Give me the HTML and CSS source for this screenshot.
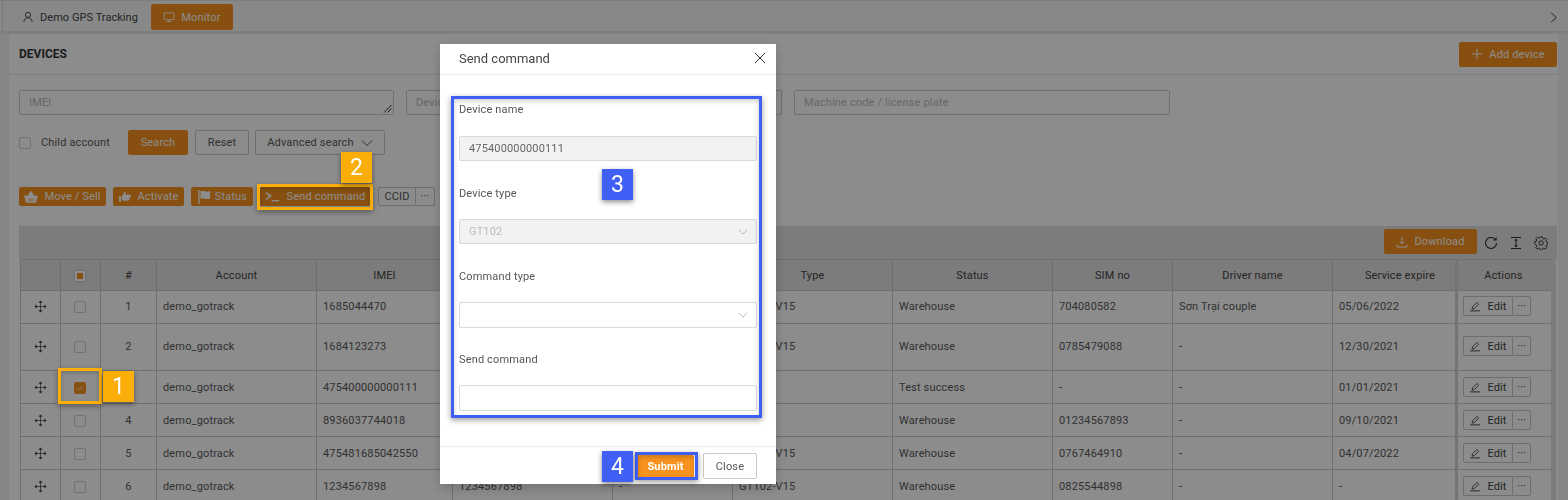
FILE: index.html
```html
<!DOCTYPE html>
<html lang="en">
<head>
  <meta charset="UTF-8" />
  <title>Devices - Send command</title>
  <link rel="stylesheet" href="styles.css">
</head>
<body>
  <svg class="sprites" xmlns="http://www.w3.org/2000/svg">
    <symbol id="i-drag" viewBox="0 0 16 16">
      <path d="M8 1.500v13M1.500 8h13M8 1 6.400 3h3.200zM8 15l-1.600-2h3.200zM1 8l2-1.600v3.200zM15 8l-2-1.600v3.200z" fill="currentColor" stroke="currentColor" stroke-width=".9"/>
    </symbol>
    <symbol id="i-edit" viewBox="0 0 16 16">
      <path d="M1.500 14.500h13" fill="none" stroke="currentColor" stroke-width="1.300"/>
      <path d="M4 12.200l.7-3L10.600 3.300l2.300 2.300-5.900 5.900z" fill="none" stroke="currentColor" stroke-width="1.200"/>
    </symbol>
    <symbol id="i-down" viewBox="0 0 12 12">
      <path d="M1 3.500 6 8.500l5-5" fill="none" stroke="currentColor" stroke-width="1"/>
    </symbol>
  </svg>

  <div class="page">
    <nav class="topbar">
      <a class="tab tab-home">
        <svg class="ico" viewBox="0 0 16 16"><circle cx="8" cy="5.200" r="3.400" fill="none" stroke="currentColor" stroke-width="1.300"/><path d="M2.500 14.500c.2-3.400 2.500-5.500 5.500-5.500s5.300 2.100 5.500 5.500" fill="none" stroke="currentColor" stroke-width="1.300"/></svg>
        Demo GPS Tracking
      </a>
      <a class="tab tab-active">
        <svg class="ico" viewBox="0 0 16 16"><path d="M1.500 2.500h13v9h-13zM8 11.500v2.500M4.500 14h7" fill="none" stroke="currentColor" stroke-width="1.100"/></svg>
        Monitor
      </a>
      <svg class="tab-next" viewBox="0 0 12 12"><path d="M3.500 1 9 6l-5.500 5" fill="none" stroke="currentColor" stroke-width="1"/></svg>
    </nav>

    <section class="card">
      <header class="card-head">
        <h1>DEVICES</h1>
        <button class="btn btn-primary btn-add">
          <svg class="ico" viewBox="0 0 12 12"><path d="M6 1v10M1 6h10" fill="none" stroke="currentColor" stroke-width="1"/></svg>
          Add device
        </button>
      </header>

      <div class="filters">
        <div class="filter-fields">
          <div class="field field-area">IMEI
            <svg class="grip" viewBox="0 0 9 9"><path d="M8.500 1 1 8.500M8.500 4.500 4.500 8.500" fill="none" stroke="#333" stroke-width="1"/></svg>
          </div>
          <div class="field">Device name</div>
          <div class="field">Machine code / license plate</div>
        </div>
        <div class="filter-actions">
          <label class="child"><span class="check"></span>Child account</label>
          <button class="btn btn-primary btn-search">Search</button>
          <button class="btn btn-reset">Reset</button>
          <button class="btn btn-adv">Advanced search <svg class="ico-down"><use href="#i-down"/></svg></button>
        </div>
      </div>

      <div class="bulk">
        <button class="btn btn-primary btn-bulk btn-move">
          <svg class="ico" viewBox="0 0 16 16"><path d="M0 6.500h16v2h-1l-1.200 6H2.200L1 8.500H0zM4 6.500 7.500 1.500h1l3.500 5" fill="currentColor"/><path d="M8 9.500v3.500M5.300 9.500l.3 3.500M10.700 9.500l-.3 3.500" stroke="#f7931e" stroke-width="1"/></svg>
          Move / Sell
        </button>
        <button class="btn btn-primary btn-bulk btn-activate">
          <svg class="ico" viewBox="0 0 16 16"><path d="M1 7h2.500v6.500H1zM4.500 7.200 7.300 2.500c1-.4 1.700.3 1.500 1.400L8.400 5.500H14c1 0 1.300 1.300.4 1.800h-.6c.6.700.3 1.500-.4 1.700.4.700 0 1.500-.7 1.700.2.900-.3 1.500-1.200 1.500H6.500l-2-.9z" fill="currentColor"/></svg>
          Activate
        </button>
        <button class="btn btn-primary btn-bulk btn-status">
          <svg class="ico" viewBox="0 0 16 16"><path d="M1.500 0h1.500v16H1.500zM4 1.500c3.500-1 5.500 1.300 11 0v8.500c-5.500 1.300-7.500-1-11 0z" fill="currentColor"/></svg>
          Status
        </button>
        <button class="btn btn-primary btn-bulk btn-send">
          <svg class="ico ico-term" viewBox="0 0 16 12"><path d="M1 1.500 6 5 1 8.500" fill="none" stroke="currentColor" stroke-width="1.700"/><path d="M7 10h8" stroke="currentColor" stroke-width="1.500"/></svg>
          Send command
        </button>
        <div class="btn-group">
          <button class="btn btn-ccid">CCID</button>
          <button class="btn btn-more">···</button>
        </div>
      </div>

      <div class="table-tools">
        <button class="btn btn-primary btn-download">
          <svg class="ico" viewBox="0 0 12 12"><path d="M6 1v7M3.800 5.800 6 8l2.200-2.200M1 8.500V11h10V8.500" fill="none" stroke="currentColor" stroke-width="1"/></svg>
          Download
        </button>
        <svg class="tool" viewBox="0 0 14 14"><path d="M12.500 7A5.500 5.500 0 1 1 10.500 2.700" fill="none" stroke="currentColor" stroke-width="1.100"/><path d="M12.600 1v3.600H9z" fill="currentColor"/></svg>
        <svg class="tool" viewBox="0 0 14 14"><path d="M2 1.500h10M2 12.500h10M7 3v8" fill="none" stroke="currentColor" stroke-width="1.100"/><path d="M7 2.600 5.400 4.800h3.200zM7 11.400 5.400 9.200h3.200z" fill="currentColor"/></svg>
        <svg class="tool" viewBox="0 0 14 14"><path d="M5.900 1h2.200l.4 1.800 1.200.5 1.600-1 1.500 1.600-1 1.500.5 1.200 1.700.4v2.200l-1.700.4-.5 1.200 1 1.500-1.500 1.500-1.600-1-1.200.5-.4 1.700H5.900l-.4-1.700-1.200-.5-1.600 1-1.500-1.500 1-1.500-.5-1.200L0 8.200V6l1.700-.4.500-1.200-1-1.500 1.500-1.600 1.600 1 1.200-.5z" transform="translate(.7 -.1) scale(.95)" fill="none" stroke="currentColor" stroke-width="1"/><circle cx="7" cy="7" r="2.200" fill="none" stroke="currentColor" stroke-width="1"/></svg>
      </div>

      <table class="devices">
        <colgroup>
          <col class="c-drag"><col class="c-check"><col class="c-num"><col class="c-account"><col class="c-imei">
          <col class="c-name"><col class="c-group"><col class="c-type"><col class="c-status"><col class="c-sim">
          <col class="c-driver"><col class="c-expire"><col class="c-actions">
        </colgroup>
        <thead>
          <tr>
            <th></th><th class="mid"><span class="check check-some"></span></th><th>#</th><th>Account</th><th>IMEI</th>
            <th></th><th></th><th>Type</th><th>Status</th><th>SIM no</th>
            <th>Driver name</th><th class="th-expire">Service expire</th><th class="col-actions">Actions</th>
          </tr>
        </thead>
        <tbody>
          <tr class="row-up">
            <td class="mid"><svg class="drag"><use href="#i-drag"/></svg></td><td class="mid"><span class="check"></span></td><td class="mid">1</td>
            <td>demo_gotrack</td><td>1685044470</td><td></td><td></td><td>GT102-V15</td><td>Warehouse</td><td>704080582</td><td>Sơn Trại couple</td><td>05/06/2022</td>
            <td class="col-actions"><div class="row-btns"><button class="btn btn-edit"><svg class="ico"><use href="#i-edit"/></svg>Edit</button><button class="btn btn-dots">···</button></div></td>
          </tr>
          <tr class="row-tall row-up">
            <td class="mid"><svg class="drag"><use href="#i-drag"/></svg></td><td class="mid"><span class="check"></span></td><td class="mid">2</td>
            <td>demo_gotrack</td><td>1684123273</td><td></td><td></td><td>GT102-V15</td><td>Warehouse</td><td>0785479088</td><td>-</td><td>12/30/2021</td>
            <td class="col-actions"><div class="row-btns"><button class="btn btn-edit"><svg class="ico"><use href="#i-edit"/></svg>Edit</button><button class="btn btn-dots">···</button></div></td>
          </tr>
          <tr>
            <td class="mid"><svg class="drag"><use href="#i-drag"/></svg></td><td class="mid"><span class="check check-on"><svg viewBox="0 0 12 12"><path d="M3 6l2.200 2.200L9.300 4" fill="none" stroke="#fff" stroke-width="1"/></svg></span></td><td class="mid">3</td>
            <td>demo_gotrack</td><td>475400000000111</td><td></td><td></td><td></td><td>Test success</td><td>-</td><td>-</td><td>01/01/2021</td>
            <td class="col-actions"><div class="row-btns"><button class="btn btn-edit"><svg class="ico"><use href="#i-edit"/></svg>Edit</button><button class="btn btn-dots">···</button></div></td>
          </tr>
          <tr>
            <td class="mid"><svg class="drag"><use href="#i-drag"/></svg></td><td class="mid"><span class="check"></span></td><td class="mid">4</td>
            <td>demo_gotrack</td><td>8936037744018</td><td></td><td></td><td></td><td>Warehouse</td><td>01234567893</td><td>-</td><td>09/10/2021</td>
            <td class="col-actions"><div class="row-btns"><button class="btn btn-edit"><svg class="ico"><use href="#i-edit"/></svg>Edit</button><button class="btn btn-dots">···</button></div></td>
          </tr>
          <tr>
            <td class="mid"><svg class="drag"><use href="#i-drag"/></svg></td><td class="mid"><span class="check"></span></td><td class="mid">5</td>
            <td>demo_gotrack</td><td>475481685042550</td><td></td><td></td><td>GT102-V15</td><td>Warehouse</td><td>0767464910</td><td>-</td><td>04/07/2022</td>
            <td class="col-actions"><div class="row-btns"><button class="btn btn-edit"><svg class="ico"><use href="#i-edit"/></svg>Edit</button><button class="btn btn-dots">···</button></div></td>
          </tr>
          <tr>
            <td class="mid"><svg class="drag"><use href="#i-drag"/></svg></td><td class="mid"><span class="check"></span></td><td class="mid">6</td>
            <td>demo_gotrack</td><td>1234567898</td><td>1234567898</td><td>-</td><td>GT102-V15</td><td>Warehouse</td><td>0825544898</td><td>-</td><td>-</td>
            <td class="col-actions"><div class="row-btns"><button class="btn btn-edit"><svg class="ico"><use href="#i-edit"/></svg>Edit</button><button class="btn btn-dots">···</button></div></td>
          </tr>
        </tbody>
      </table>
    </section>
  </div>

  <div class="mask"></div>

  <div class="modal">
    <header class="modal-head">
      <h2>Send command</h2>
      <svg class="modal-close" viewBox="0 0 12 12"><path d="M1 1l10 10M11 1 1 11" fill="none" stroke="#333" stroke-width="1"/></svg>
    </header>
    <div class="modal-body">
      <label class="m-label">Device name</label>
      <div class="m-input m-disabled">475400000000111</div>
      <label class="m-label">Device type</label>
      <div class="m-input m-disabled m-ghost">GT102<svg class="ico-down"><use href="#i-down"/></svg></div>
      <label class="m-label">Command type</label>
      <div class="m-input m-tall"><svg class="ico-down"><use href="#i-down"/></svg></div>
      <label class="m-label">Send command</label>
      <div class="m-input m-tall"></div>
    </div>
    <footer class="modal-foot">
      <button class="btn m-submit">Submit</button>
      <button class="btn m-close">Close</button>
    </footer>
  </div>

  <!-- tutorial marks drawn over the screenshot -->
  <div class="mark mark-orange mark-check"></div>
  <div class="mark mark-orange mark-send"></div>
  <div class="mark mark-blue mark-form"></div>
  <div class="mark mark-blue mark-submit"></div>
  <div class="badge badge-orange badge-1">1</div>
  <div class="badge badge-orange badge-2">2</div>
  <div class="badge badge-blue badge-3">3</div>
  <div class="badge badge-blue badge-4">4</div>
</body>
</html>
```

FILE: styles.css
```css
* {
  box-sizing: border-box;
}

html, body {
  height: 500px;
  margin: 0;
  overflow: hidden;
}

body {
  font-family: Roboto, "Liberation Sans", sans-serif;
  font-size: 11px;
  letter-spacing: 0.15px;
  color: #595959;
  background: #f3f3f3;
}

.sprites {
  display: none;
}

button {
  font: inherit;
  letter-spacing: inherit;
}

.ico {
  width: 12px;
  height: 12px;
  flex: none;
}

.ico-down {
  width: 12px;
  height: 12px;
  color: #555;
}

/* top bar */
.topbar {
  height: 34px;
  padding: 3px 9px 0 22px;
  display: flex;
  align-items: flex-start;
  gap: 13px;
  position: relative;
  border-top: 1px solid #e4e4e4;
  border-bottom: 3px solid #e8e8e8;
  background: #f8f8f8;
}

.topbar::before {
  content: "";
  position: absolute;
  left: 0;
  top: 0;
  width: 2px;
  height: 30px;
  border-right: 1px solid #ddd;
}

.tab {
  height: 26px;
  display: flex;
  align-items: center;
  gap: 6px;
  color: #444;
}

.tab-home {
  letter-spacing: 0.05px;
}

.tab-active {
  width: 82px;
  justify-content: center;
  background: #f7931e;
  color: #fff;
  border-radius: 2px;
}

.tab-next {
  width: 11px;
  height: 11px;
  margin: 8px 0 0 auto;
  color: #333;
}

/* card */
.card {
  margin: 0 10px 0 9px;
  background: #fff;
}

.card-head {
  height: 41px;
  padding: 0 1px 0 10px;
  display: flex;
  align-items: center;
  justify-content: space-between;
  border-bottom: 1px solid #e8e8e8;
}

.card-head h1 {
  margin: 0;
  font-size: 12px;
  font-weight: 700;
  letter-spacing: 0;
  color: #333;
}

.btn {
  height: 25px;
  padding: 0;
  display: inline-flex;
  align-items: center;
  justify-content: center;
  gap: 6px;
  background: #fff;
  border: 1px solid #c8c8c8;
  border-radius: 2px;
  color: #595959;
}

.btn-primary {
  background: #f7931e;
  border-color: #f7931e;
  color: #fff;
}

.btn-add {
  width: 98px;
  gap: 6px;
}

/* filters */
.filters {
  padding: 15px 0 0 10px;
}

.filter-fields {
  display: grid;
  grid-template-columns: 375px 376px 376px;
  gap: 12px;
}

.field {
  height: 25px;
  line-height: 23px;
  padding: 0 9px;
  border: 1px solid #ccc;
  border-radius: 2px;
  color: #bbb;
  position: relative;
}

.grip {
  position: absolute;
  right: 1px;
  bottom: 1px;
  width: 9px;
  height: 9px;
}

.filter-actions {
  margin-top: 15px;
  display: flex;
  align-items: center;
}

.child {
  width: 109px;
  display: flex;
  align-items: center;
  gap: 10px;
}

.check {
  width: 12px;
  height: 12px;
  display: inline-block;
  flex: none;
  background: #fff;
  border: 1px solid #d0d0d0;
  border-radius: 2px;
  vertical-align: middle;
}

.check-on {
  background: #f7931e;
  border-color: #f7931e;
}

.check-on svg {
  display: block;
  width: 10px;
  height: 10px;
}

.check-some {
  position: relative;
}

.check-some::after {
  content: "";
  position: absolute;
  inset: 2px;
  background: #f7931e;
}

.btn-search {
  width: 60px;
}

.btn-reset {
  width: 54px;
  margin-left: 7px;
}

.btn-adv {
  width: 130px;
  margin-left: 6px;
  gap: 7px;
}

/* bulk actions */
.bulk {
  margin-top: 32px;
  padding-left: 10px;
  display: flex;
  align-items: center;
  gap: 7px;
}

.btn-bulk {
  height: 19px;
  gap: 6px;
}

.btn-bulk .ico {
  width: 14px;
  height: 14px;
}

.btn-move {
  width: 87px;
}

.btn-activate {
  width: 71px;
  gap: 5px;
}

.btn-status {
  width: 62px;
  gap: 4px;
}

.btn-send {
  width: 110px;
  gap: 7px;
  margin-right: 1px;
}

.btn-bulk .ico-term {
  width: 15px;
  height: 12px;
}

.btn-group {
  display: flex;
}

.btn-ccid {
  width: 38px;
  height: 19px;
  border-radius: 2px 0 0 2px;
}

.btn-more {
  width: 19px;
  height: 19px;
  border-left: 0;
  border-radius: 0 2px 2px 0;
}

/* table */
.table-tools {
  height: 33px;
  margin: 20px 1px 0 10px;
  padding: 3px 9px 0 0;
  display: flex;
  align-items: flex-start;
  justify-content: flex-end;
  gap: 11px;
  background: #e2e2e2;
}

.btn-download {
  width: 93px;
  margin-right: -4px;
}

.tool {
  width: 14px;
  height: 14px;
  margin-top: 7px;
  color: #333;
}

.devices {
  width: 1533px;
  margin-left: 11px;
  table-layout: fixed;
  border-collapse: collapse;
}

.c-drag { width: 40px; }
.c-check { width: 40px; }
.c-num { width: 56px; }
.c-account { width: 160px; }
.c-imei { width: 136px; }
.c-name { width: 160px; }
.c-group { width: 120px; }
.c-type { width: 160px; }
.c-status { width: 160px; }
.c-sim { width: 120px; }
.c-driver { width: 160px; }
.c-expire { width: 124px; }
.c-actions { width: 97px; }

.devices th, .devices td {
  padding: 0 6px;
  border: 1px solid #ccc;
  font-weight: 400;
  white-space: nowrap;
  overflow: hidden;
}

.devices th {
  height: 31px;
  text-align: center;
  background: #e2e2e2;
  color: #444;
}

.devices .th-expire {
  padding-left: 18px;
}

.devices td {
  height: 33px;
  color: #595959;
}

.devices .row-tall td {
  height: 47px;
}

.devices .row-up td {
  padding-bottom: 2px;
}

.devices td.mid, .devices th.mid {
  padding-left: 0;
  padding-right: 0;
  text-align: center;
}

.devices .mid .check {
  margin-right: 1px;
}

.devices .col-actions {
  padding-left: 5px;
  padding-right: 0;
  border-left: 3px solid #d4d4d4;
  border-right: 5px solid #e2e2e2;
}

.devices th.col-actions {
  padding: 0 2px 0 0;
}

.drag {
  width: 13px;
  height: 13px;
  display: block;
  margin: 0 auto;
  color: #444;
}

.row-btns {
  display: flex;
}

.btn-edit {
  width: 50px;
  height: 20px;
  border-radius: 2px 0 0 2px;
  color: #444;
}

.btn-dots {
  width: 18px;
  height: 20px;
  border-left: 0;
  border-radius: 0 2px 2px 0;
  color: #444;
}

/* dim layer */
.mask {
  position: fixed;
  inset: 0;
  background: rgba(0, 0, 0, 0.45);
}

/* modal */
.modal {
  position: fixed;
  left: 440px;
  top: 44px;
  width: 336px;
  height: 440px;
  display: flex;
  flex-direction: column;
  background: #fff;
  box-shadow: 0 4px 12px rgba(0, 0, 0, 0.2);
}

.modal-head {
  height: 31px;
  padding: 0 10px 2px 19px;
  display: flex;
  align-items: center;
  justify-content: space-between;
  border-bottom: 1px solid #eee;
  flex: none;
}

.modal-head h2 {
  margin: 0;
  font-size: 13px;
  font-weight: 400;
  letter-spacing: 0;
  color: #444;
}

.modal-close {
  width: 12px;
  height: 12px;
}

.modal-body {
  flex: 1;
  padding: 28px 19px 0 19px;
}

.m-label {
  height: 16px;
  display: block;
  line-height: 16px;
  color: #555;
}

.m-label:first-child {
  line-height: 14px;
}

.m-input {
  height: 25px;
  margin: 17px 0 25px;
  padding: 0 9px;
  display: flex;
  align-items: center;
  justify-content: space-between;
  border: 1px solid #d9d9d9;
  border-radius: 2px;
  color: #666;
}

.m-disabled {
  background: #f2f2f2;
}

.m-ghost {
  color: #bbb;
}

.m-input .ico-down {
  width: 10px;
  height: 10px;
  margin: 0 -1px 0 auto;
  color: #aaa;
}

.m-tall {
  height: 26px;
  margin-bottom: 24px;
}

.modal-foot {
  height: 38px;
  padding: 6px 19px 0 0;
  display: flex;
  justify-content: flex-end;
  align-items: flex-start;
  gap: 9px;
  border-top: 1px solid #eee;
  flex: none;
}

.m-submit {
  width: 57px;
  height: 23px;
  margin-top: 2px;
  background: #f7931e;
  border-color: #f7931e;
  color: #fff;
  font-weight: 700;
}

.m-close {
  width: 54px;
  height: 26px;
}

/* tutorial marks */
.mark {
  position: fixed;
  border-width: 3px;
  border-style: solid;
  box-shadow: 0 2px 6px rgba(0, 0, 0, 0.4), inset 0 2px 5px rgba(0, 0, 0, 0.2);
}

.mark-orange {
  border-color: #fbae0a;
}

.mark-blue {
  border-color: #4060f5;
}

.mark-check {
  left: 58px;
  top: 368px;
  width: 44px;
  height: 36px;
}

.mark-send {
  left: 257px;
  top: 184px;
  width: 116px;
  height: 26px;
}

.mark-form {
  left: 451px;
  top: 96px;
  width: 311px;
  height: 322px;
}

.mark-submit {
  left: 635px;
  top: 452px;
  width: 63px;
  height: 28px;
}

.badge {
  position: fixed;
  width: 31px;
  height: 31px;
  display: flex;
  align-items: center;
  justify-content: center;
  font-size: 23px;
  letter-spacing: 0;
  color: #fff;
  box-shadow: 0 2px 5px rgba(0, 0, 0, 0.45);
}

.badge-orange {
  background: #fbae0a;
}

.badge-blue {
  background: #4060f5;
}

.badge-1 {
  left: 103px;
  top: 371px;
}

.badge-2 {
  left: 341px;
  top: 152px;
}

.badge-3 {
  left: 602px;
  top: 169px;
}

.badge-4 {
  left: 602px;
  top: 451px;
}
```
